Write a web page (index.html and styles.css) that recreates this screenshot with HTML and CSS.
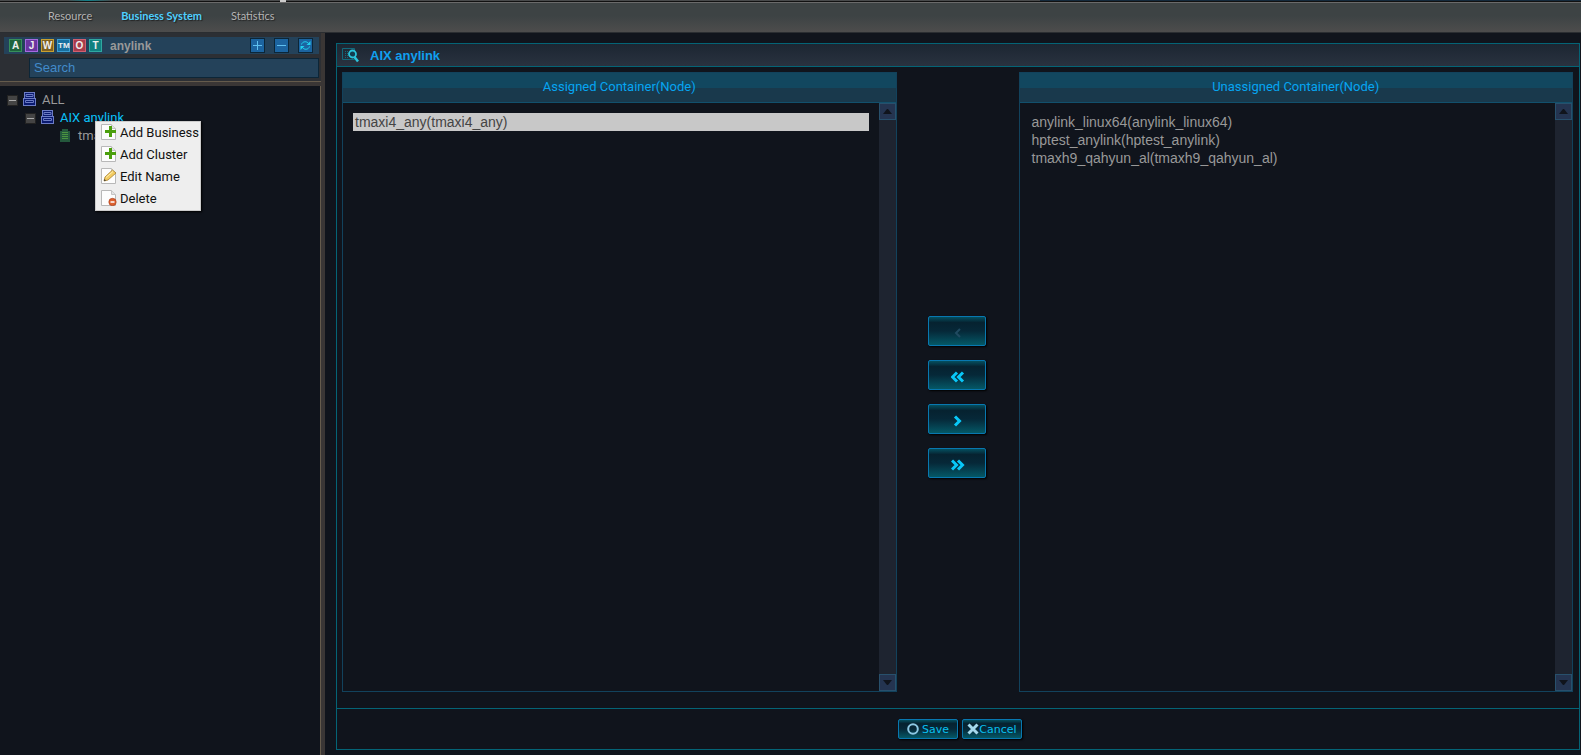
FILE: index.html
```html
<!DOCTYPE html>
<html lang="en">
<head>
  <meta charset="UTF-8">
  <meta name="viewport" content="width=device-width, initial-scale=1.0">
  <title>Business System</title>
  <link rel="stylesheet" href="styles.css">
</head>
<body>
  <!-- shared icons -->
  <svg class="sprite" aria-hidden="true">
    <symbol id="server" viewBox="0 0 13 14">
      <path fill="#6c7cc4" d="M1 0h11v6h1v8H0V6h1z"/>
      <path fill="#0a1a70" d="M2 1h9v5H2zM1 7h11v6H1z"/>
      <path fill="none" stroke="#6c7cc4" d="M3 2.500h7v2H3zM2.500 8.500h8v2h-8z"/>
    </symbol>
    <symbol id="page" viewBox="0 0 16 16">
      <path fill="#fdfdfd" stroke="#b8b8b8" d="M.5.5h10l4 4v11H.5z"/>
      <path fill="#e4e4e4" stroke="#c4c4c4" d="M10.500.5v4h4"/>
    </symbol>
    <symbol id="plus" viewBox="0 0 16 16">
      <use href="#page"/>
      <path fill="#4b9f0d" d="M8 2h3v4h4v3h-4v4H8V9H4V6h4z"/>
    </symbol>
  </svg>

  <header class="topbar">
    <nav class="nav">
      <a href="#">Resource</a>
      <a href="#" class="active">Business System</a>
      <a href="#">Statistics</a>
    </nav>
  </header>

  <div class="main">
    <aside class="sidebar">
      <div class="tools">
        <div class="toolrow">
          <button class="type green">A</button>
          <button class="type purple">J</button>
          <button class="type yellow">W</button>
          <button class="type blue">TM</button>
          <button class="type red">O</button>
          <button class="type teal">T</button>
          <span class="toolname">anylink</span>
          <div class="actions">
            <button class="act" aria-label="Expand"><svg width="13" height="13"><path d="M2 6.500h9M6.500 2v9"/></svg></button>
            <button class="act" aria-label="Collapse"><svg width="13" height="13"><path d="M2 6.500h9"/></svg></button>
            <button class="act" aria-label="Refresh"><svg class="refresh" width="13" height="13"><path d="M2.500 5.500C3.500 2 8 2 9.500 4.500M10.500 7.500C9.500 11 5 11 3.500 8.500"/><path class="tip" d="M11.500 2v4h-4zM1.500 11V7h4z"/></svg></button>
          </div>
        </div>
        <input class="search" type="text" placeholder="Search" aria-label="Search">
      </div>
      <ul class="tree">
        <li>
          <button class="toggle" aria-label="Collapse ALL"></button>
          <svg class="server"><use href="#server"/></svg>
          <span>ALL</span>
        </li>
        <li class="level1">
          <button class="toggle" aria-label="Collapse AIX anylink"></button>
          <svg class="server"><use href="#server"/></svg>
          <span class="selected">AIX anylink</span>
        </li>
        <li class="level2">
          <svg class="node" viewBox="0 0 10 13"><path fill="#24583c" d="M2 0h6v2h2v11H0V2h2z"/><path stroke="#4b9440" d="M2 3.500h6M2 5.500h6M2 7.500h6M2 9.500h6"/></svg>
          <span>tma</span>
        </li>
      </ul>
      <div class="menu">
        <button><svg><use href="#plus"/></svg>Add Business</button>
        <button><svg><use href="#plus"/></svg>Add Cluster</button>
        <button><svg viewBox="0 0 16 16"><use href="#page"/><path fill="#f3cc62" stroke="#a7802e" stroke-width=".8" d="M3 13l1-4 7.500-7L15 5l-8 7z"/><path fill="none" stroke="#fff0b0" d="M5 9.500l7-6"/><path fill="#333" d="M3 13l.5-2 1.500 1.400z"/></svg>Edit Name</button>
        <button><svg viewBox="0 0 16 16"><use href="#page"/><circle cx="11.500" cy="12" r="3.700" fill="#dc6130" stroke="#a83b16" stroke-width=".6"/><path stroke="#fff" stroke-width="1.500" d="M9.500 12h4"/></svg>Delete</button>
      </div>
    </aside>

    <main class="content">
      <section class="panel">
        <h1 class="title">
          <svg width="18" height="16"><path fill="none" stroke="#12697c" d="M.5 1.500h12v11H.5z"/><path stroke="#12697c" stroke-dasharray="1 1" d="M3.500 4v7M5.500 4v7"/><circle cx="10.500" cy="7" r="3.500" fill="#123d50" stroke="#2bc4dc" stroke-width="1.800"/><path stroke="#2bc4dc" stroke-width="2.500" d="M12.500 10l3.500 4.500"/></svg>
          AIX anylink
        </h1>
        <div class="lists">
          <div class="box">
            <h2>Assigned Container(Node)</h2>
            <div class="boxbody">
              <ul>
                <li class="picked">tmaxi4_any(tmaxi4_any)</li>
              </ul>
              <div class="scroll">
                <button aria-label="Scroll up"><svg width="9" height="5"><path d="M4 0h1l4 5H0z"/></svg></button>
                <button aria-label="Scroll down"><svg width="9" height="5"><path d="M0 0h9L5 5H4z"/></svg></button>
              </div>
            </div>
          </div>
          <div class="movers">
            <button class="btn move" disabled aria-label="Assign"><svg width="14" height="12"><path d="M9 2L5 6l4 4"/></svg></button>
            <button class="btn move" aria-label="Assign all"><svg width="14" height="12"><path d="M6 1.500L1.500 6 6 10.500M12 1.500L7.500 6l4.500 4.500"/></svg></button>
            <button class="btn move" aria-label="Unassign"><svg width="14" height="12"><path d="M4 1.500L8.500 6 4 10.500"/></svg></button>
            <button class="btn move" aria-label="Unassign all"><svg width="14" height="12"><path d="M1 1.500L5.500 6 1 10.500M7 1.500L11.500 6 7 10.500"/></svg></button>
          </div>
          <div class="box">
            <h2>Unassigned Container(Node)</h2>
            <div class="boxbody">
              <ul>
                <li>anylink_linux64(anylink_linux64)</li>
                <li>hptest_anylink(hptest_anylink)</li>
                <li>tmaxh9_qahyun_al(tmaxh9_qahyun_al)</li>
              </ul>
              <div class="scroll">
                <button aria-label="Scroll up"><svg width="9" height="5"><path d="M4 0h1l4 5H0z"/></svg></button>
                <button aria-label="Scroll down"><svg width="9" height="5"><path d="M0 0h9L5 5H4z"/></svg></button>
              </div>
            </div>
          </div>
        </div>
        <footer class="footer">
          <button class="btn small"><svg width="12" height="12"><circle cx="6" cy="6" r="4.800" stroke="#8cc8e4" stroke-width="2"/></svg>Save</button>
          <button class="btn small tight"><svg width="12" height="12"><path stroke="#a4d8ec" stroke-width="3" d="M1.500 1.500l9 9M10.500 1.500l-9 9"/></svg>Cancel</button>
        </footer>
      </section>
    </main>
  </div>
</body>
</html>
```
FILE: styles.css
```css
* {
  box-sizing: border-box;
}

body {
  margin: 0;
  height: 100vh;
  display: flex;
  flex-direction: column;
  background: #10141c;
  color: #999;
  font-family: "Liberation Sans", Arial, sans-serif;
  font-size: 13px;
}

button {
  padding: 0;
  font-family: inherit;
  cursor: pointer;
}

ul {
  list-style: none;
  margin: 0;
  padding: 0;
}

.sprite {
  position: absolute;
  width: 0;
  height: 0;
}

.topbar {
  flex: none;
  height: 33px;
  padding-top: 2px;
  border-bottom: 1px solid #2a2d31;
  /* thin strip above the bar, then the bar itself */
  background:
    linear-gradient(90deg, transparent 68px, #10808a 88px, transparent 112px) 0 0 / 100% 1px no-repeat,
    linear-gradient(90deg, transparent 280px, #ccc 280px, #ccc 286px, transparent 286px) 0 0 / 100% 2px no-repeat,
    linear-gradient(90deg, #484a4b 1040px, #142a3c 1040px) 0 0 / 100% 1px no-repeat,
    linear-gradient(#111 2px, #6a6a6a 2px, #6a6a6a 3px, #3d4344 3px, #3d4344 50%, #4c4c4c 31px);
}

.nav {
  display: flex;
  gap: 29px;
  padding-left: 48px;
  line-height: 28px;
  font-family: Lato, sans-serif;
  font-size: 11px;
}

.nav a {
  color: #b4b4b4;
  text-decoration: none;
  text-shadow: 1px 1px 1px #222;
}

.nav a.active {
  color: #4fd0ff;
  font-weight: bold;
}

.main {
  flex: 1;
  display: flex;
  min-height: 0;
}

/* left side */
.sidebar {
  position: relative;
  flex: none;
  width: 325px;
  border-right: 4px solid #3a3635;
  box-shadow: inset -1px 0 #655b4c;
}

.tools {
  height: 53px;
  padding: 4px 2px 0 4px;
  background: #2c2f34;
  border-bottom: 4px solid #3a3635;
  box-shadow: inset 0 -1px #655b4c;
}

.toolrow {
  display: flex;
  align-items: center;
  gap: 3px;
  height: 17px;
  padding: 0 6px 0 5px;
  background: #24425a;
}

.type {
  width: 13px;
  height: 13px;
  border: 1px solid;
  color: #eee;
  font-size: 10px;
  font-weight: bold;
  line-height: 11px;
}

.green { background: #1d633c; border-color: #37905a; }
.purple { background: #6a35a0; border-color: #a56be0; }
.yellow { background: #806020; border-color: #c9a030; }
.blue { background: #1870a0; border-color: #3a9cd0; font-size: 8px; }
.red { background: #a83c4c; border-color: #d06070; }
.teal { background: #108080; border-color: #30a8a0; }

.toolname {
  margin-left: 5px;
  font-size: 12px;
  font-weight: bold;
}

.actions {
  display: flex;
  gap: 9px;
  margin-left: auto;
}

.act {
  display: flex;
  width: 15px;
  height: 15px;
  border: 1px solid #0c2638;
  background: #1c64a0;
}

.act svg {
  fill: none;
  stroke: #5fc0f0;
}

.act .refresh {
  stroke: #20d0f0;
}

.act .tip {
  fill: #20d0f0;
  stroke: none;
}

.search {
  display: block;
  width: 290px;
  height: 20px;
  margin: 4px 0 0 25px;
  padding: 0 4px 2px;
  border: 1px solid #0c2638;
  background: #24425a;
  color: #428bca;
  font-family: inherit;
  font-size: 13px;
}

.search::placeholder {
  color: #428bca;
}

.tree {
  padding: 4px 7px;
  font-family: Roboto, sans-serif;
}

.tree li {
  display: flex;
  align-items: center;
  height: 18px;
}

.tree .level1 {
  padding-left: 18px;
}

.tree .level2 {
  padding-left: 53px;
}

.toggle {
  width: 11px;
  height: 11px;
  margin: 2px 5px 0 0;
  border: 1px solid #222;
  background: linear-gradient(#aaa, #aaa) center / 7px 1px no-repeat #444;
}

.server {
  width: 13px;
  height: 14px;
  margin-right: 6px;
}

.node {
  width: 10px;
  height: 13px;
  margin-right: 8px;
}

.selected {
  color: #0ac0f8;
}

.menu {
  position: absolute;
  left: 95px;
  top: 88px;
  width: 106px;
  border: 1px solid #ccc;
  background: #eee;
  box-shadow: 1px 1px 2px #000;
}

.menu button {
  display: flex;
  align-items: center;
  gap: 3px;
  width: 100%;
  height: 22px;
  padding: 0 0 2px 5px;
  border: 0;
  background: none;
  color: #111;
  font-family: Roboto, sans-serif;
  font-size: 13px;
  white-space: nowrap;
}

.menu svg {
  flex: none;
  width: 16px;
  height: 16px;
}

/* right side */
.content {
  flex: 1;
  display: flex;
  padding: 10px 1px 5px 11px;
}

.panel {
  flex: 1;
  display: flex;
  flex-direction: column;
  border: 1px solid #046476;
}

.title {
  display: flex;
  align-items: center;
  gap: 10px;
  height: 23px;
  margin: 0;
  padding: 0 5px;
  border-bottom: 1px solid #046476;
  background: linear-gradient(#1c2632, #29323f);
  color: #10a0f0;
  font-size: 13px;
}

.lists {
  flex: 1;
  display: flex;
  padding: 5px 6px 16px 5px;
}

.box {
  flex: 1;
  display: flex;
  flex-direction: column;
  border: 1px solid #12425c;
}

.box h2 {
  height: 30px;
  margin: 0;
  border-bottom: 1px solid #12506c;
  background: linear-gradient(#12475f 50%, #19394c 50%);
  color: #06a5f2;
  font-family: Roboto, sans-serif;
  font-size: 13px;
  font-weight: normal;
  line-height: 28px;
  text-align: center;
}

.boxbody {
  flex: 1;
  display: flex;
}

.boxbody ul {
  flex: 1;
  padding: 10px;
  font-size: 14px;
  line-height: 18px;
}

.boxbody li {
  padding: 0 2px;
}

.picked {
  background: #c8c8c8;
  color: #444;
}

.scroll {
  display: flex;
  flex-direction: column;
  justify-content: space-between;
  width: 17px;
  background: #1e2430;
}

.scroll button {
  display: flex;
  align-items: center;
  justify-content: center;
  height: 17px;
  border: 1px solid #28506c;
  background: #243450;
  fill: #10141c;
}

.movers {
  display: flex;
  flex-direction: column;
  align-items: center;
  justify-content: center;
  gap: 14px;
  width: 122px;
  padding: 30px 2px 0 0;
}

.btn {
  display: flex;
  align-items: center;
  justify-content: center;
  border: 1px solid #0878b0;
  border-radius: 2px;
  background: linear-gradient(#045060, #062230 20%, #062838 50%, #045866);
  box-shadow: 1px 1px 2px #000;
  color: #08c0f0;
}

.btn svg {
  fill: none;
}

.move {
  width: 58px;
  height: 30px;
  padding: 4px 0 0 2px;
}

.move svg {
  stroke: #08c8f8;
  stroke-width: 3;
}

.move:disabled svg {
  stroke: #204a60;
  stroke-width: 2;
}

.footer {
  display: flex;
  justify-content: center;
  gap: 4px;
  height: 41px;
  padding: 10px 0 0 4px;
  border-top: 1px solid #046476;
}

.small {
  gap: 3px;
  width: 60px;
  height: 20px;
  font-family: "DejaVu Sans", sans-serif;
  font-size: 11px;
}

.tight {
  gap: 0;
}
```
